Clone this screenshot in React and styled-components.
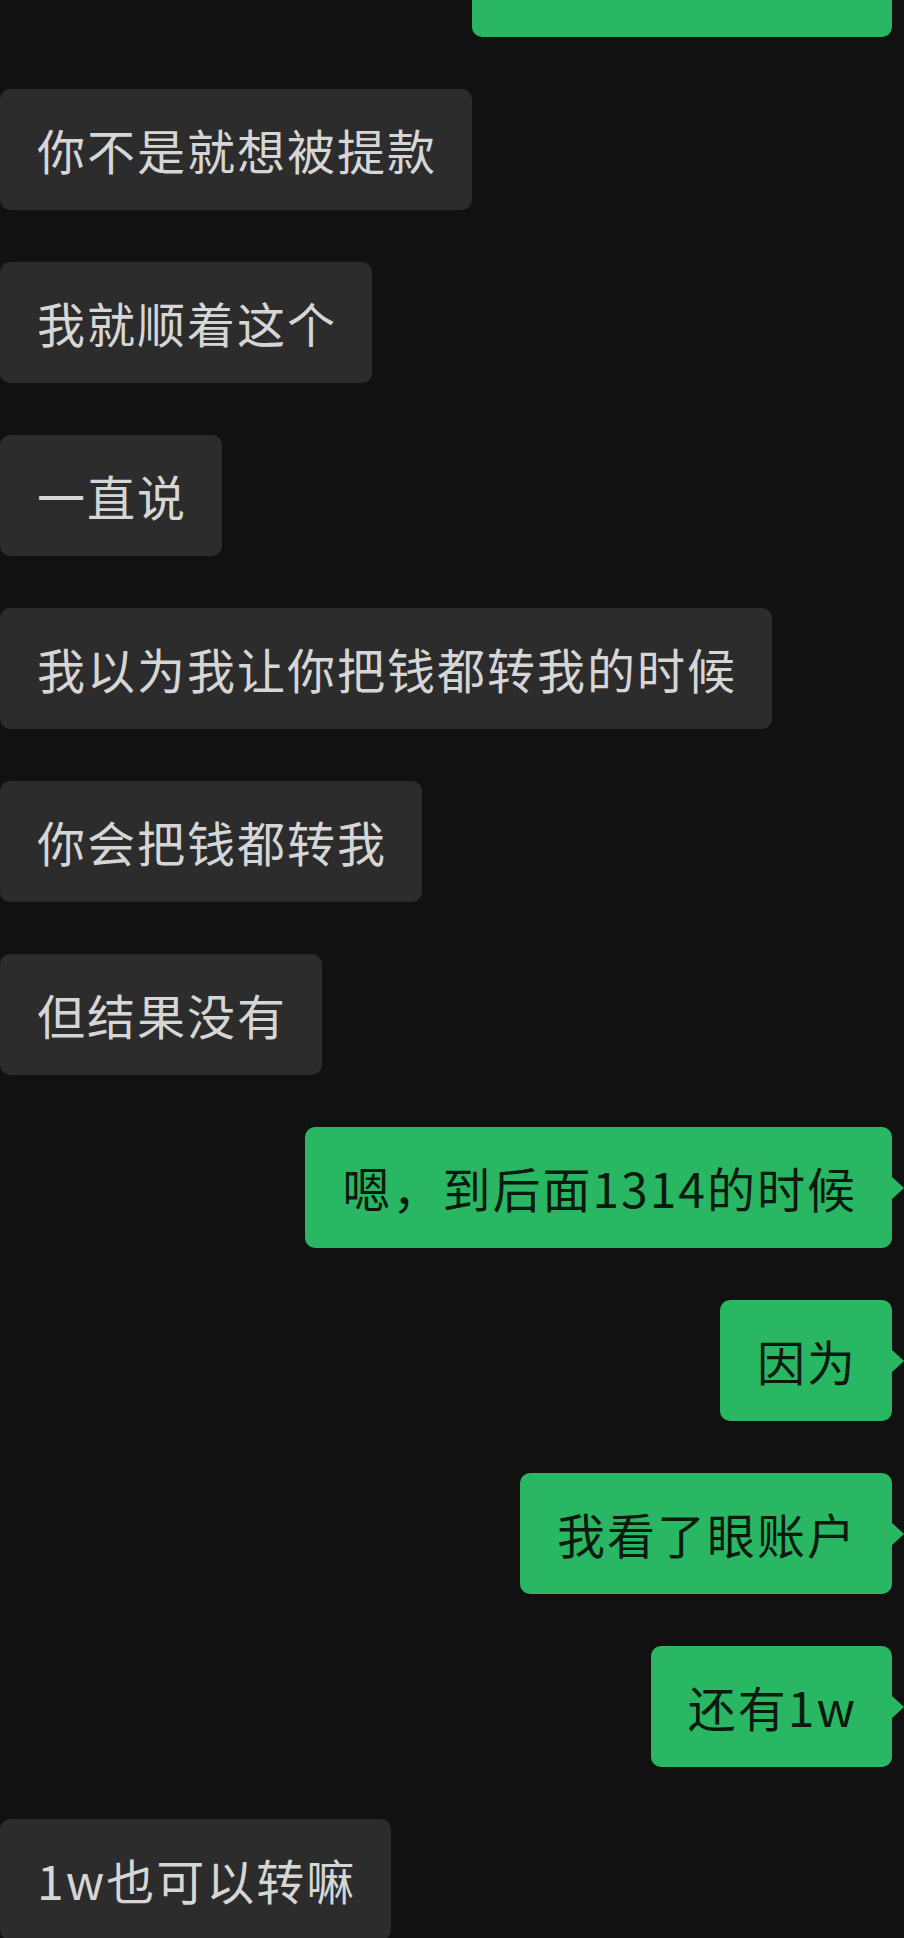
import React from "react";
import styled, { createGlobalStyle } from "styled-components";

/* 全局 */
const Global = createGlobalStyle`
    html, body {
        margin: 0;
        padding: 0;
        background: #111111;
    }
    body {
        width: 904px;
        height: 1938px;
        overflow: hidden;
        font-family: "Noto Sans CJK SC", "Noto Sans", sans-serif;
    }
`;

const ChatBox = styled.div`
    display: flex;
    flex-direction: column;
    gap: 52px;
    margin-top: -84px;
`;

const Row = styled.div`
    display: flex;
    justify-content: ${p => (p.$mine ? "flex-end" : "flex-start")};
    padding-right: ${p => (p.$mine ? "12px" : "0")};
`;

const Bubble = styled.div`
    position: relative;
    box-sizing: border-box;
    height: 121px;
    width: ${p => (p.$w ? p.$w + "px" : "auto")};
    padding: 27px 35px 27px 37px;
    border-radius: 10px;
    background: ${p => (p.$mine ? "#2ab763" : "#2c2c2c")};
    color: ${p => (p.$mine ? "#0b1a0f" : "#d6d6d6")};
    font-size: 48px;
    line-height: 67px;
    letter-spacing: 2px;
    white-space: nowrap;

    /* 右侧小尾巴 */
    ${p => p.$mine && `
        &::after {
            content: "";
            position: absolute;
            top: 50%;
            right: -12px;
            margin-top: -12px;
            border-top: 12px solid transparent;
            border-bottom: 12px solid transparent;
            border-left: 13px solid #2ab763;
        }
    `}
`;

const messages = [
    { mine: true, text: "", w: 420 },
    { mine: false, text: "你不是就想被提款" },
    { mine: false, text: "我就顺着这个" },
    { mine: false, text: "一直说" },
    { mine: false, text: "我以为我让你把钱都转我的时候" },
    { mine: false, text: "你会把钱都转我" },
    { mine: false, text: "但结果没有" },
    { mine: true, text: "嗯，到后面1314的时候" },
    { mine: true, text: "因为" },
    { mine: true, text: "我看了眼账户" },
    { mine: true, text: "还有1w" },
    { mine: false, text: "1w也可以转嘛" }
];

const App = function App() {
    return <>
        <Global />
        <ChatBox>
            {messages.map((m, i) => (
                <Row key={i} $mine={m.mine}>
                    <Bubble $mine={m.mine} $w={m.w}>{m.text}</Bubble>
                </Row>
            ))}
        </ChatBox>
    </>;
};

export default App;
